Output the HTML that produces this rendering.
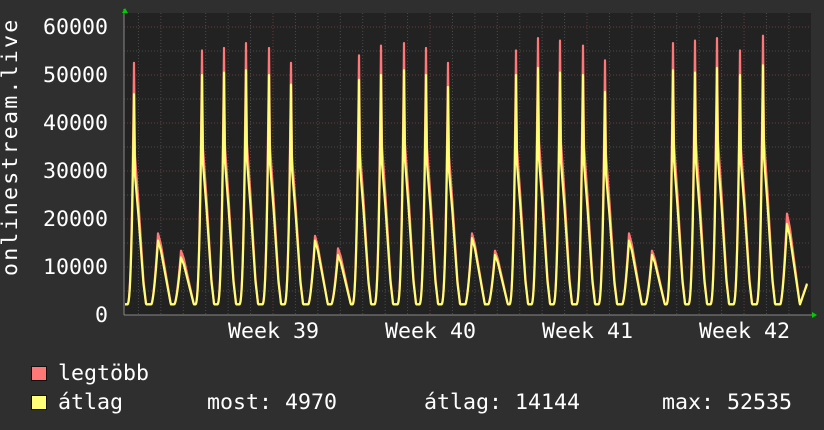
<!DOCTYPE html><html><head><style>
body{margin:0;background:#2f2f2f;width:824px;height:430px;overflow:hidden;font-family:"DejaVu Sans Mono","Liberation Mono",monospace;color:#fff}
.t{position:absolute;font-size:21.6px;white-space:pre;line-height:1}
.r{right:716px;text-align:right}
</style></head><body>
<svg id="g" width="824" height="430" style="position:absolute;left:0;top:0"></svg>
<div class="t r" style="top:17px">60000</div>
<div class="t r" style="top:65px">50000</div>
<div class="t r" style="top:113px">40000</div>
<div class="t r" style="top:161px">30000</div>
<div class="t r" style="top:209px">20000</div>
<div class="t r" style="top:257px">10000</div>
<div class="t r" style="top:305px">0</div>
<div class="t" style="left:228px;top:321px">Week 39</div>
<div class="t" style="left:385px;top:321px">Week 40</div>
<div class="t" style="left:542px;top:321px">Week 41</div>
<div class="t" style="left:699px;top:321px">Week 42</div>
<div class="t" style="left:0px;top:276px;letter-spacing:2.2px;transform:rotate(-90deg);transform-origin:0 0">onlinestream.live</div>
<div style="position:absolute;left:31px;top:366px;width:16px;height:15px;background:#ff7777;border:1px solid #111;box-sizing:border-box"></div>
<div style="position:absolute;left:31px;top:395px;width:16px;height:15px;background:#ffff77;border:1px solid #111;box-sizing:border-box"></div>
<div class="t" style="left:58px;top:363px">legtöbb</div>
<div class="t" style="left:58px;top:392px">átlag</div>
<div class="t" style="left:207px;top:392px">most: 4970</div>
<div class="t" style="left:424px;top:392px">átlag: 14144</div>
<div class="t" style="left:662px;top:392px">max: 52535</div>
<script>
var s=document.getElementById('g'),h='';
var X0=124,X1=811,Y0=315,Y1=13;
function y(v){return Y0-v*0.0048}
h+='<rect x="'+X0+'" y="'+Y1+'" width="'+(X1-X0)+'" height="'+(Y0-Y1)+'" fill="#222"/>';
for(var v=5000;v<=60000;v+=5000){var c=v%10000?'#4a4a4a':'#6a3a3a';h+='<line x1="'+X0+'" x2="'+X1+'" y1="'+y(v)+'" y2="'+y(v)+'" stroke="'+c+'" stroke-dasharray="1,2"/>';}
for(var x=273-22.43*6;x<X1;x+=22.43){var wk=Math.abs(((x-273)/157)-Math.round((x-273)/157))<0.01;h+='<line x1="'+x+'" x2="'+x+'" y1="'+Y1+'" y2="'+Y0+'" stroke="'+(wk?'#6a3a3a':'#4a4a4a')+'" stroke-dasharray="1,2"/>';}
var P=[[134,51000,46000],[158,16500,15500],[181,13000,12000],[202,53500,50000],[224,54000,50500],[246,55000,51000],[269,54000,50000],[291,51000,48000],[315,16000,15500],[338,13500,12500],[359,52500,49000],[381,54500,50000],[404,55000,51000],[426,54000,50000],[448,51000,47500],[472,16500,16000],[495,13000,12500],[516,53500,50000],[538,56000,51500],[560,55500,50500],[583,54500,50000],[605,51500,46500],[629,16500,15500],[652,13000,12500],[673,55000,51000],[695,55500,50500],[717,56000,51500],[740,53500,50000],[763,56500,52000],[787,20500,19000]];
function lerp(a,b,t){return a+(b-a)*t}
function val(x,k){var best=2200;for(var i=0;i<P.length;i++){var p=P[i][0],pk=P[i][k],d=(x-p)/22.4,f;var small=pk<25000;
if(d<-0.3||d>0.6)continue;
if(small){if(d<0){f=Math.pow((d+0.3)/0.3,1.6);}else f=d<0.12?1-d*1.2:Math.max(0,0.86-(d-0.12)*1.9);}
else{if(d<0){f=Math.pow((d+0.3)/0.3,2.6);}
else if(d<0.04)f=lerp(1,0.62,d/0.04);
else if(d<0.2)f=lerp(0.62,0.42,(d-0.04)/0.16);
else if(d<0.42)f=lerp(0.42,0.1,(d-0.2)/0.22);
else f=Math.max(0,lerp(0.1,0,(d-0.42)/0.12));}
best=Math.max(best,2200+(pk-2200)*f);}
if(x>800)best=Math.max(best,2200+(x-800)*600);return best}
['#ff7777','#ffff77'].forEach(function(c,j){var d='';for(var x=X0+1;x<=X1-4;x+=0.5){d+=(d?'L':'M')+x+' '+y(val(x,j+1)*(j?1:1.03)).toFixed(1);}h+='<path d="'+d+'" fill="none" stroke="'+c+'" stroke-width="2.2" stroke-linejoin="round"/>';});
h+='<line x1="'+X0+'" x2="'+(X1+3)+'" y1="'+Y0+'" y2="'+Y0+'" stroke="#888"/><line x1="'+X0+'" x2="'+X0+'" y1="'+(Y1-4)+'" y2="'+Y0+'" stroke="#888"/>';
h+='<path d="M122 13L125 8L128 13Z" fill="#0c0"/><path d="M812 312L817 315L812 318Z" fill="#0c0"/>';
s.innerHTML=h;
</script>
</body></html>
